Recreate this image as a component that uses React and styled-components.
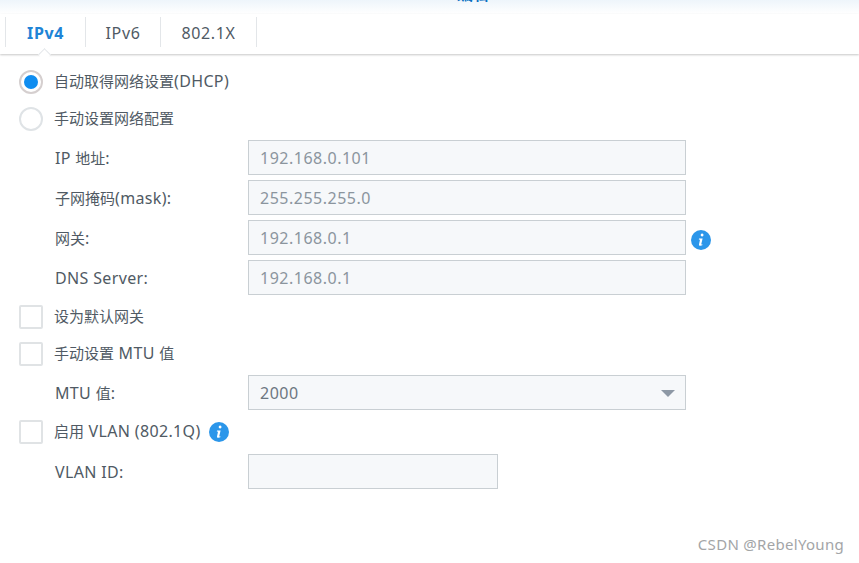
import React from 'react';
import styled, { createGlobalStyle } from 'styled-components';

const GlobalStyle = createGlobalStyle`
  html, body {
    margin: 0;
    padding: 0;
    background: #fff;
  }
  body {
    font-family: "Noto Sans", "Noto Sans CJK SC", sans-serif;
    color: #505a64;
  }
`;

const Page = styled.div`
  position: relative;
  width: 859px;
  height: 563px;
  overflow: hidden;
  background: #fff;
`;

const TitleBar = styled.div`
  height: 14px;
  overflow: hidden;
  display: flex;
  justify-content: center;
  padding-left: 87px;
  background: linear-gradient(#eef5fb, #fff);
`;

const Title = styled.div`
  margin-top: -17px;
  font-size: 16px;
  line-height: 22px;
  font-weight: 700;
  color: #0a6fc2;
`;

const TabBar = styled.div`
  position: relative;
  display: flex;
  height: 40px;
  padding: 3px 0 0 5px;
  box-sizing: border-box;
  box-shadow: 0 1px 2px rgba(0, 0, 0, 0.22);
`;

const Tab = styled.div`
  width: ${p => p.$width}px;
  height: 30px;
  padding-top: 2px;
  display: flex;
  align-items: center;
  justify-content: center;
  box-sizing: border-box;
  border-left: 1px solid #e3e6e9;
  border-right: ${p => (p.$last ? '1px solid #e3e6e9' : 'none')};
  font-size: 16px;
  letter-spacing: 0.6px;
  font-weight: ${p => (p.$active ? 700 : 400)};
  color: ${p => (p.$active ? '#1f84d6' : '#505a64')};
`;

const Notch = styled.div`
  position: absolute;
  left: 40px;
  bottom: -5px;
  width: 9px;
  height: 9px;
  background: #fff;
  transform: rotate(45deg);
  border-left: 1px solid #e3e6e9;
  border-top: 1px solid #e3e6e9;
  box-sizing: border-box;
`;

const Form = styled.div`
  padding: 9px 0 0 19px;
  display: flex;
  flex-direction: column;
`;

const OptionRow = styled.div`
  height: 37px;
  display: flex;
  align-items: center;
`;

const RowText = styled.span`
  font-size: 15px;
  line-height: 20px;
  margin-bottom: 2px;
  white-space: pre;
`;

const Latin = styled.span`
  font-size: 16px;
  letter-spacing: 0.35px;
`;

const Radio = styled.span`
  width: 24px;
  height: 24px;
  box-sizing: border-box;
  margin-right: 11px;
  border-radius: 50%;
  border: 2px solid ${p => (p.$checked ? '#d5cfcf' : '#dfe3e6')};
  display: flex;
  align-items: center;
  justify-content: center;
  flex: none;
  &::after {
    content: '';
    display: ${p => (p.$checked ? 'block' : 'none')};
    width: 14px;
    height: 14px;
    border-radius: 50%;
    background: #0f8df0;
  }
`;

const Checkbox = styled.span`
  width: 24px;
  height: 24px;
  box-sizing: border-box;
  margin-right: 11px;
  border: 2px solid #e0e3e5;
  border-radius: 2px;
  flex: none;
`;

const FieldGroup = styled.div`
  display: flex;
  flex-direction: column;
  gap: 5px;
  margin: ${p => p.$margin || '3px 0'};
`;

const FieldRow = styled.div`
  display: flex;
  align-items: center;
  height: 35px;
  padding-left: 36px;
`;

const FieldLabel = styled.div`
  width: 193px;
  font-size: 15px;
  line-height: 20px;
  white-space: pre;
  flex: none;
`;

const TextBox = styled.div`
  width: ${p => p.$width || 438}px;
  height: 35px;
  box-sizing: border-box;
  display: flex;
  align-items: center;
  justify-content: space-between;
  padding: 1px 15px 0 11px;
  background: #f6f8fa;
  border: 1px solid #c9cfd3;
  font-size: 16px;
  letter-spacing: 0.5px;
  color: #8b959e;
  flex: none;
`;

const SelectValue = styled.span`
  color: #6d7781;
`;

const Caret = styled.span`
  width: 0;
  height: 0;
  border-left: 7px solid transparent;
  border-right: 7px solid transparent;
  border-top: 7px solid #8d98a5;
  margin-right: -5px;
`;

const InfoWrap = styled.span`
  display: inline-flex;
  margin-left: ${p => p.$gap}px;
  margin-top: ${p => p.$drop || 0}px;
  flex: none;
`;

const Watermark = styled.div`
  position: absolute;
  right: 15px;
  top: 534px;
  font-size: 15px;
  line-height: 20px;
  letter-spacing: 0.3px;
  color: #a3a5a7;
`;

const InfoIcon = ({ gap, drop }) => (
  <InfoWrap $gap={gap} $drop={drop}>
    <svg width="20" height="20" viewBox="0 0 20 20">
      <circle cx="10" cy="10" r="10" fill="#2b96ea" />
      <path d="M11.1 3.6a1.4 1.4 0 1 1-.01 0z" fill="#fff" />
      <path
        d="M8 8.4h3.6l-1.3 5.7c-.1.5.3.6 1.2.2l-.2 1c-1.6.8-3.6.7-3.3-.9l1-4.6-1.2-.2z"
        fill="#fff"
      />
    </svg>
  </InfoWrap>
);

const fields = [
  { label: <><Latin>IP </Latin>地址<Latin>:</Latin></>, value: '192.168.0.101' },
  { label: <>子网掩码<Latin>(mask):</Latin></>, value: '255.255.255.0' },
  { label: <>网关<Latin>:</Latin></>, value: '192.168.0.1', info: true },
  { label: <Latin>DNS Server:</Latin>, value: '192.168.0.1' },
];

export default function App() {
  return (
    <Page>
      <GlobalStyle />
      <TitleBar>
        <Title>编辑</Title>
      </TitleBar>
      <TabBar>
        <Tab $width={80} $active>IPv4</Tab>
        <Tab $width={75}>IPv6</Tab>
        <Tab $width={97} $last>802.1X</Tab>
        <Notch />
      </TabBar>
      <Form>
        <OptionRow>
          <Radio $checked />
          <RowText>自动取得网络设置<Latin>(DHCP)</Latin></RowText>
        </OptionRow>
        <OptionRow>
          <Radio />
          <RowText>手动设置网络配置</RowText>
        </OptionRow>
        <FieldGroup>
          {fields.map(field => (
            <FieldRow key={field.value + field.info}>
              <FieldLabel>{field.label}</FieldLabel>
              <TextBox>{field.value}</TextBox>
              {field.info && <InfoIcon gap={5} drop={4} />}
            </FieldRow>
          ))}
        </FieldGroup>
        <OptionRow>
          <Checkbox />
          <RowText>设为默认网关</RowText>
        </OptionRow>
        <OptionRow>
          <Checkbox />
          <RowText>手动设置<Latin> MTU </Latin>值</RowText>
        </OptionRow>
        <FieldGroup>
          <FieldRow>
            <FieldLabel><Latin>MTU </Latin>值<Latin>:</Latin></FieldLabel>
            <TextBox>
              <SelectValue>2000</SelectValue>
              <Caret />
            </TextBox>
          </FieldRow>
        </FieldGroup>
        <OptionRow>
          <Checkbox />
          <RowText>启用<Latin> VLAN (802.1Q)</Latin></RowText>
          <InfoIcon gap={8} />
        </OptionRow>
        <FieldGroup $margin="4px 0">
          <FieldRow>
            <FieldLabel><Latin>VLAN ID:</Latin></FieldLabel>
            <TextBox $width={250} />
          </FieldRow>
        </FieldGroup>
      </Form>
      <Watermark>CSDN @RebelYoung</Watermark>
    </Page>
  );
}
